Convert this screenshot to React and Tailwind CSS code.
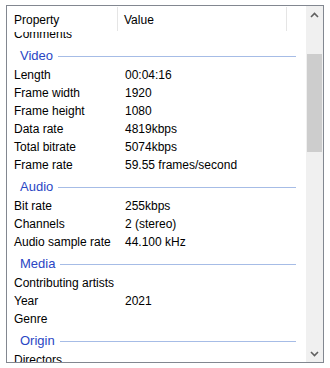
import React from 'react';

const grupos = [
  {
    titulo: 'Video',
    filas: [
      ['Length', '00:04:16'],
      ['Frame width', '1920'],
      ['Frame height', '1080'],
      ['Data rate', '4819kbps'],
      ['Total bitrate', '5074kbps'],
      ['Frame rate', '59.55 frames/second'],
    ],
  },
  {
    titulo: 'Audio',
    filas: [
      ['Bit rate', '255kbps'],
      ['Channels', '2 (stereo)'],
      ['Audio sample rate', '44.100 kHz'],
    ],
  },
  {
    titulo: 'Media',
    filas: [
      ['Contributing artists', ''],
      ['Year', '2021'],
      ['Genre', ''],
    ],
  },
  {
    titulo: 'Origin',
    filas: [['Directors', '']],
  },
];

function Fila({ nombre, valor }) {
  return (
    <div className="flex h-[18px] items-center">
      <div className="w-[111px] shrink-0 pl-[7px] truncate">{nombre}</div>
      <div className="pl-[7px] whitespace-nowrap">{valor}</div>
    </div>
  );
}

export default function App() {
  return (
    <div className="w-[330px] h-[368px] bg-white pt-[5px] pl-[6px]" style={{ fontFamily: '"Liberation Sans", Arial, sans-serif' }}>
      <div className="w-[318px] h-[358px] border border-[#828790] flex text-[12px] text-black">
        <div className="flex-1 flex flex-col overflow-hidden">
          {/* cabecera */}
          <div className="h-[26px] shrink-0 flex items-center relative z-10 bg-white">
            <div className="w-[111px] h-[24px] flex items-center pl-[7px] pt-[1px] border-r border-[#e5e5e5]">Property</div>
            <div className="w-[169px] h-[24px] flex items-center pl-[6px] pt-[1px] border-r border-[#e5e5e5]">Value</div>
          </div>
          <div className="flex-1 overflow-hidden">
            <div className="mt-[-7px]">
              <Fila nombre="Comments" valor="" />
              {grupos.map((g) => (
                <div key={g.titulo}>
                  <div className="h-[23px] flex items-center pt-[3px] pl-[13px] pr-[4px]">
                    <span className="text-[#2a46c4] text-[13px]">{g.titulo}</span>
                    <div className="flex-1 h-px bg-[#a6bce6] ml-[5px] mr-[6px]" />
                  </div>
                  {g.filas.map(([n, v]) => (
                    <Fila key={n} nombre={n} valor={v} />
                  ))}
                </div>
              ))}
            </div>
          </div>
        </div>
        {/* barra de desplazamiento */}
        <div className="w-[17px] bg-[#f0f0f0] flex flex-col">
          <div className="h-[17px] flex items-center justify-center">
            <svg width="9" height="6" viewBox="0 0 9 6">
              <path d="M1 5 L4.5 1.5 L8 5" fill="none" stroke="#606060" strokeWidth="1.6" />
            </svg>
          </div>
          <div className="h-[31px]" />
          <div className="h-[98px] mx-[1px] bg-[#cdcdcd]" />
          <div className="flex-1" />
          <div className="h-[17px] flex items-center justify-center">
            <svg width="9" height="6" viewBox="0 0 9 6">
              <path d="M1 1 L4.5 4.5 L8 1" fill="none" stroke="#606060" strokeWidth="1.6" />
            </svg>
          </div>
        </div>
      </div>
    </div>
  );
}
